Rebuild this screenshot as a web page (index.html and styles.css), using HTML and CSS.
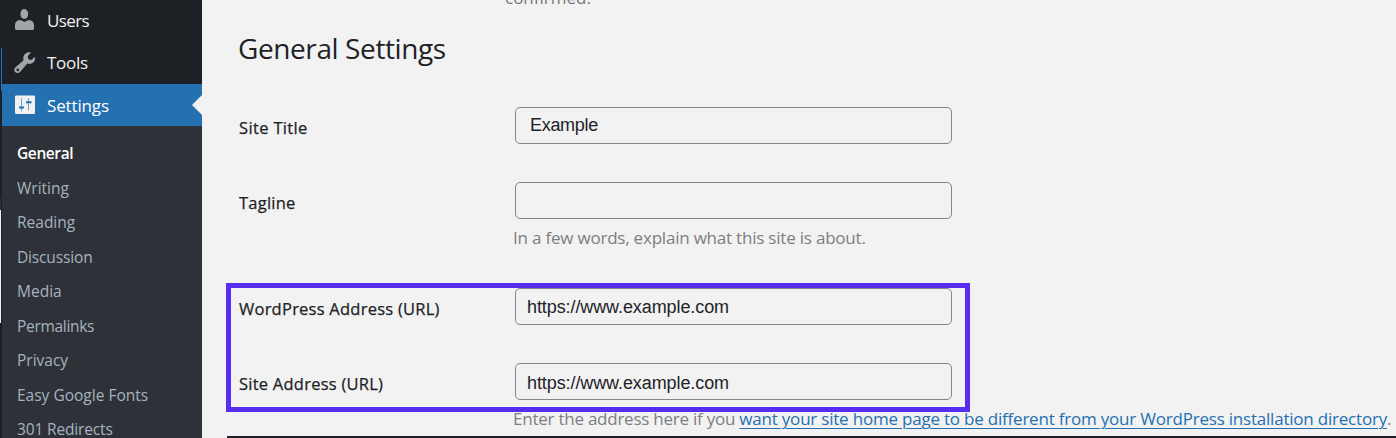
FILE: index.html
```
<!DOCTYPE html>
<html lang="en">
<head>
<meta charset="utf-8">
<title>General Settings</title>
<link rel="stylesheet" href="styles.css">
</head>
<body>
<div class="app">
  <aside class="sidebar">
    <nav class="menu">
      <a class="item"><svg class="icon" viewBox="0 0 20 20"><ellipse cx="9.300" cy="3" rx="3.900" ry="5"/><path d="M4.200 9.200h2L9.400 11l3.200-1.800h2c2.700 0 4.400 2.300 4.400 5.500v2.500c0 1.200-.7 1.800-1.800 1.800H1.800C.7 19 0 18.400 0 17.200v-2.500c0-3.200 1.500-5.500 4.200-5.500z"/></svg><span class="users">Users</span></a>
      <a class="item"><svg class="icon" viewBox="0 0 20 20"><path fill-rule="evenodd" d="M18.200 9.600c-1.700 1.500-4 1.700-5.900.9L5.300 18.700c-1.500 1.700-3.900 1.700-5.200.4s-1.200-3.500.4-4.900L8.600 7.200C7.800 5.100 8.300 2.800 10 1.100 11.600-.5 14-1.100 16-.4l-3.300 3.600.7 3 3 .7 3.400-3.200c.600 2.100.1 4.400-1.600 5.900zM2.800 18.200a1.300 1.300 0 1 0 0-2.600 1.300 1.300 0 0 0 0 2.600z"/></svg><span class="tools">Tools</span></a>
      <a class="item current"><svg class="icon" viewBox="0 0 20 20"><path class="panel" d="M1.300.5h17.400q1.300 0 1.300 1.300v16q0 1.300-1.300 1.300H1.300Q0 19.100 0 17.800v-16Q0 .5 1.300.5z"/><path class="track" d="M6.500 3v13.500M13.500 3v12.500"/><path class="knob" d="M4 12.500h5M11 7.200h5.500"/></svg><span class="settings">Settings</span></a>
    </nav>
    <nav class="submenu">
      <a class="active">General</a>
      <a>Writing</a>
      <a>Reading</a>
      <a class="tight">Discussion</a>
      <a>Media</a>
      <a class="tighter">Permalinks</a>
      <a>Privacy</a>
      <a>Easy Google Fonts</a>
      <a class="tight">301 Redirects</a>
    </nav>
    <i class="edge edge-blue"></i><i class="edge edge-dark"></i><i class="edge edge-light"></i><i class="edge edge-low"></i>
  </aside>
  <main class="content">
    <p class="notice">confirmed.</p>
    <h1 class="title">General Settings</h1>
    <form class="form">
      <div class="row row-title"><label class="label l-title">Site Title</label><div class="field"><div class="input plain">Example</div></div></div>
      <div class="row row-tag"><label class="label">Tagline</label><div class="field"><div class="input"></div><p class="hint">In a few words, explain what this site is about.</p></div></div>
      <div class="row row-wp"><label class="label">WordPress Address (URL)</label><div class="field"><div class="input">https://www.example.com</div></div></div>
      <div class="row row-site"><label class="label">Site Address (URL)</label><div class="field"><div class="input url2">https://www.example.com</div><p class="hint"><span class="lead">Enter the address here if you </span><a class="link">want your site home page to be different from your WordPress installation directory</a>.</p></div></div>
    </form>
    <div class="highlight"></div>
    <div class="bottom-line"></div>
  </main>
</div>
</body>
</html>
```
FILE: styles.css
```
* { box-sizing: border-box; }
body { margin: 0; font-family: "Open Sans", "Noto Sans", sans-serif; background: #f2f2f2; overflow: hidden; }
.app { display: flex; width: 1396px; height: 438px; overflow: hidden; }

.sidebar { position: relative; width: 202px; flex: none; background: #1d2125; display: flex; flex-direction: column; }
.item { display: flex; align-items: center; height: 42px; padding-left: 15px; gap: 12px; color: #f0f0f1; font-size: 17px; line-height: 42px; white-space: nowrap; }
.icon { width: 20px; height: 20px; flex: none; fill: #a0a5aa; overflow: visible; }
.users { letter-spacing: -0.6px; }
.tools { letter-spacing: -0.3px; }
.settings { letter-spacing: -0.15px; padding-top: 2px; }
.current { position: relative; margin-left: 2px; padding-left: 13px; background: #2470b1; color: #fff; }
.current::after { content: ""; position: absolute; right: 0; top: 11px; border: solid transparent; border-width: 10px 10px 10px 0; border-right-color: #f2f2f2; }
.panel { fill: #f1f1f1; }
.track { stroke: #72a3cc; stroke-width: 1; fill: none; }
.knob { stroke: #2470b1; stroke-width: 2; fill: none; }
.submenu { flex: 1; margin-left: 2px; padding: 10px 0 0 15px; background: #2e3238; overflow: hidden; }
.submenu a { display: block; height: 34.5px; line-height: 34.5px; font-size: 15.5px; color: #a6b3bf; white-space: nowrap; }
.submenu .active { color: #fff; font-weight: 600; letter-spacing: -0.4px; }
.submenu .tight { letter-spacing: -0.15px; }
.submenu .tighter { letter-spacing: -0.3px; }
.edge { position: absolute; left: 0; width: 1px; }
.edge-blue { top: 48px; height: 43px; left: 1px; background: #2470b1; }
.edge-dark { top: 126px; height: 72px; background: #1d2125; }
.edge-light { top: 210px; height: 113px; background: #f1f1f1; }
.edge-low { top: 198px; height: 12px; background: #2e3238; }

.content { position: relative; flex: 1; min-width: 0; padding-left: 37px; color: #1d2327; }
.notice { margin: -14px 0 0 266px; height: 28px; line-height: 24px; font-size: 17px; color: #74787d; }
.title { margin: 0 0 0 -1px; height: 70px; line-height: 69px; font-size: 28px; font-weight: 400; letter-spacing: -0.4px; }
.form { display: flex; flex-direction: column; padding-top: 23px; }
.row { display: flex; align-items: flex-start; }
.row-title, .row-wp { height: 75px; }
.row-tag { height: 106px; }
.label { width: 276px; flex: none; padding-top: 8px; line-height: 26px; font-size: 16.5px; letter-spacing: 0.24px; -webkit-text-stroke: 0.25px #1d2327; white-space: nowrap; }
.l-title { letter-spacing: 0.35px; }
.field { flex: 1; min-width: 0; }
.input { width: 437px; height: 37px; border: 1px solid #85858a; border-radius: 5px; padding-left: 11px; line-height: 36px; font-family: "Liberation Sans", Arial, sans-serif; font-size: 18px; letter-spacing: -0.09px; color: #1d2327; white-space: nowrap; }
.plain { padding-left: 14px; line-height: 34px; letter-spacing: -0.3px; }
.url2 { line-height: 38px; }
.hint { margin: 6px 0 0 -2px; line-height: 26px; font-size: 17px; letter-spacing: -0.21px; color: #7b7f83; white-space: nowrap; }
.lead { letter-spacing: -0.24px; }
.link { color: #2470b1; letter-spacing: -0.21px; text-decoration: underline; text-decoration-thickness: 1px; text-underline-offset: 3px; text-decoration-skip-ink: auto; }
.highlight { position: absolute; left: 24px; top: 283px; width: 744px; height: 129px; border: 5px solid #552cf0; }
.bottom-line { position: absolute; left: 25px; right: 0; top: 436px; height: 2px; background: #1d2125; }
```
